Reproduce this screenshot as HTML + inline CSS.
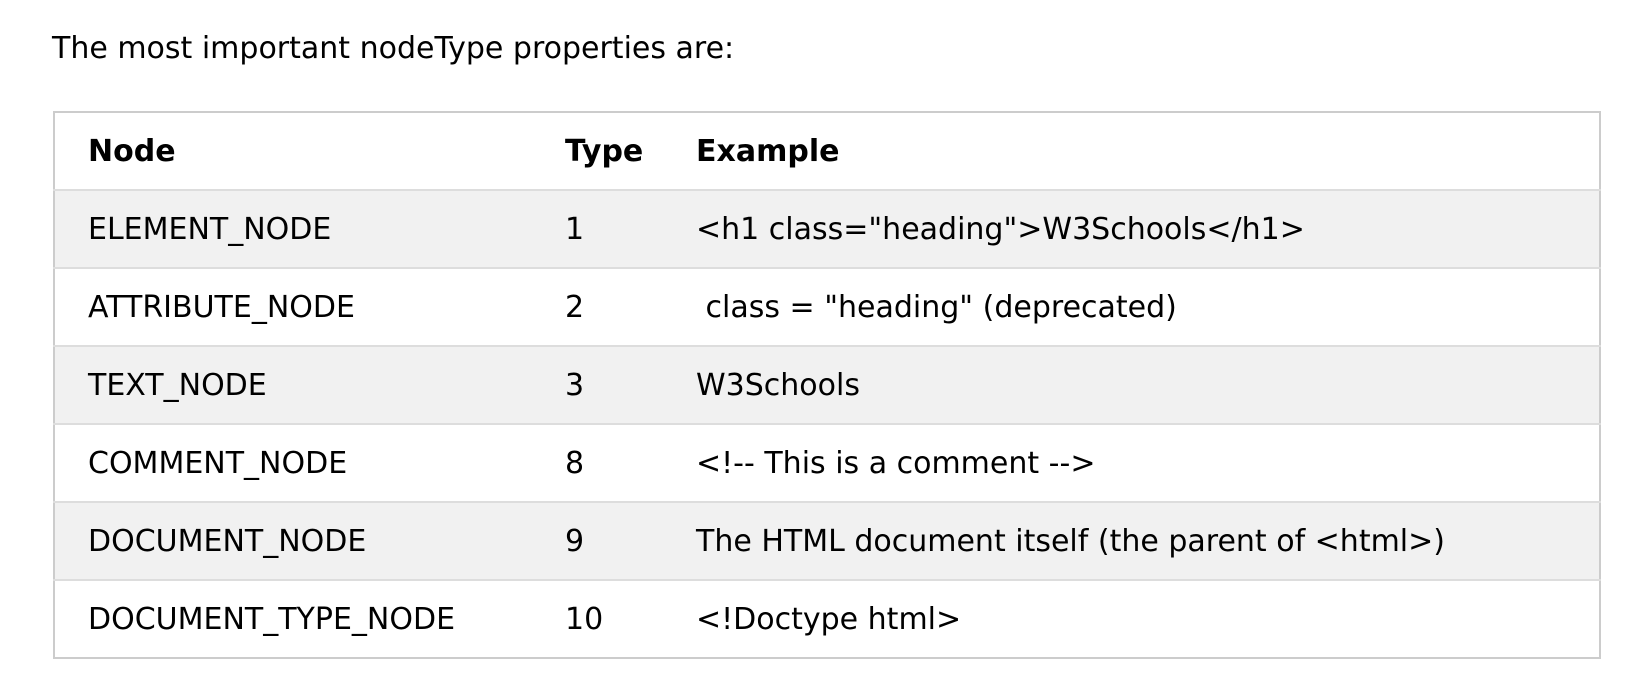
<!DOCTYPE html>
<html><head><meta charset="utf-8"><style>
html,body{margin:0;padding:0;background:#fff;width:1636px;height:684px;overflow:hidden}
body{font-family:Verdana,"DejaVu Sans",sans-serif;font-size:30px;color:#000}
p{position:absolute;left:52px;top:28px;margin:0;line-height:42px}
table{position:absolute;left:53px;top:111px;width:1548px;border-collapse:collapse;border:2px solid #ccc;table-layout:fixed}
td,th{height:76px;padding:0;text-align:left;vertical-align:middle;border-bottom:2px solid #ddd;white-space:pre;overflow:visible}
td:first-child,th:first-child{padding-left:33px}
th{font-weight:bold}
tr:nth-child(even){background:#f1f1f1}
tr:last-child td{border-bottom:none}
</style></head><body>
<p>The most important nodeType properties are:</p>
<table>
<colgroup><col style="width:511px"><col style="width:131px"><col></colgroup>
<tr><th>Node</th><th>Type</th><th>Example</th></tr>
<tr><td>ELEMENT_NODE</td><td>1</td><td>&lt;h1 class="heading"&gt;W3Schools&lt;/h1&gt;</td></tr>
<tr><td>ATTRIBUTE_NODE</td><td>2</td><td> class = "heading" (deprecated)</td></tr>
<tr><td>TEXT_NODE</td><td>3</td><td>W3Schools</td></tr>
<tr><td>COMMENT_NODE</td><td>8</td><td>&lt;!-- This is a comment --&gt;</td></tr>
<tr><td>DOCUMENT_NODE</td><td>9</td><td>The HTML document itself (the parent of &lt;html&gt;)</td></tr>
<tr><td>DOCUMENT_TYPE_NODE</td><td>10</td><td>&lt;!Doctype html&gt;</td></tr>
</table>
</body></html>
